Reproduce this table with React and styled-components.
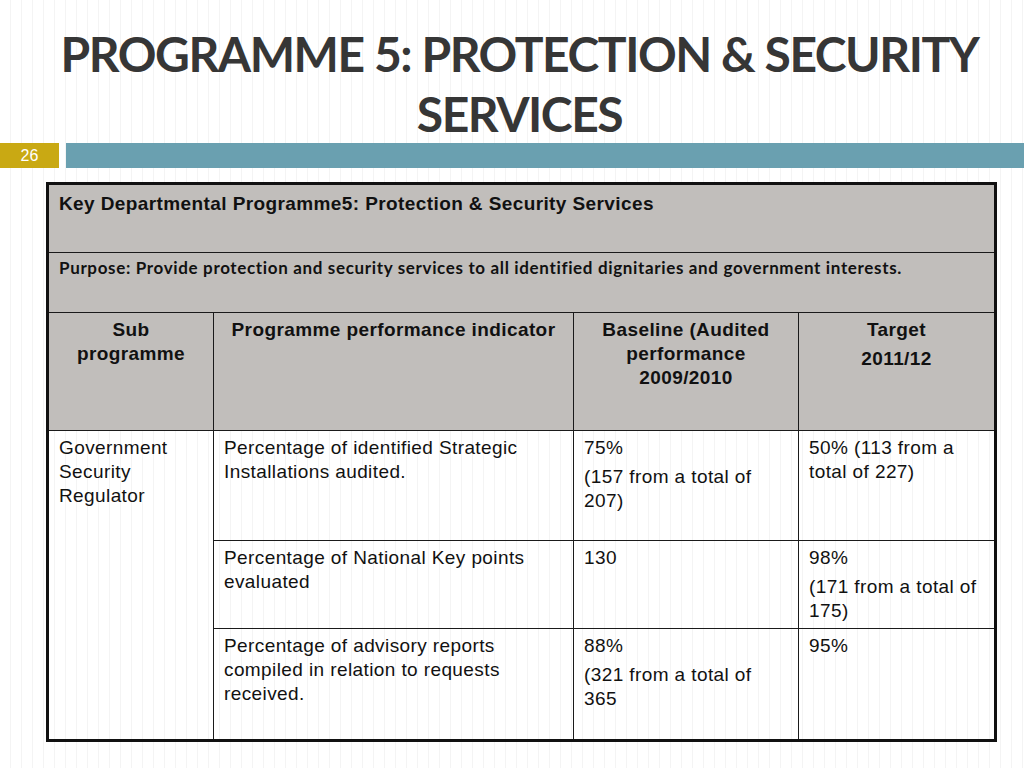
import React from "react";
import styled, { createGlobalStyle } from "styled-components";

const GlobalStyle = createGlobalStyle`
  html, body {
    margin: 0;
    padding: 0;
  }
  body {
    width: 1024px;
    height: 768px;
    overflow: hidden;
    background-color: #ffffff;
    background-image: repeating-linear-gradient(
      90deg,
      transparent 0px,
      transparent 10px,
      #f4f4f4 10px,
      #f4f4f4 11px
    );
    font-family: "Liberation Sans", Arial, sans-serif;
  }
`;

const St = {
  Slide: styled.div`
    width: 1024px;
    height: 768px;
    display: flex;
    flex-direction: column;
  `,

  Title: styled.h1`
    margin: 0;
    padding: 24px 0 0 15px;
    height: 143px;
    flex-shrink: 0;
    box-sizing: border-box;
    text-align: center;
    font-family: "Lato", "Liberation Sans", sans-serif;
    font-weight: 700;
    font-size: 48px;
    line-height: 60px;
    letter-spacing: -1.45px;
    color: #363636;
  `,

  BarRow: styled.div`
    display: flex;
    gap: 7px;
    height: 25px;
    flex-shrink: 0;
  `,

  PageNumber: styled.div`
    width: 59px;
    background-color: #c9a913;
    color: #ffffff;
    font-size: 16px;
    line-height: 25px;
    text-align: center;
  `,

  Stripe: styled.div`
    flex: 1;
    background-color: #6aa0b0;
  `,

  TableWrap: styled.div`
    padding: 14px 0 0 46px;
  `,

  Table: styled.table`
    width: 951px;
    border-collapse: collapse;
    border: 3px solid #111111;
    table-layout: fixed;
  `,

  Cell: styled.td`
    border: 1px solid #1a1a1a;
    background-color: ${({ shaded }) => (shaded ? "#c1bebb" : "transparent")};
    vertical-align: top;
    text-align: ${({ center }) => (center ? "center" : "left")};
    font-weight: ${({ bold }) => (bold ? 700 : 400)};
    font-size: 19px;
    letter-spacing: 0.4px;
    line-height: 24px;
    color: #111111;
    height: ${({ h }) => h}px;
    padding: ${({ pad }) => pad || "5px 10px 0 10px"};
    box-sizing: border-box;
  `,

  Purpose: styled.span`
    font-family: "Lato", "Liberation Sans", sans-serif;
    font-weight: 700;
    font-size: 17px;
    letter-spacing: 0.65px;
  `,

  Para: styled.div`
    & + & {
      margin-top: 5px;
    }
  `,
};

const rows = [
  {
    indicator: "Percentage of identified Strategic Installations audited.",
    baseline: ["75%", "(157 from a total of 207)"],
    target: ["50% (113 from a total of 227)"],
    h: 110,
  },
  {
    indicator: "Percentage of National Key points evaluated",
    baseline: ["130"],
    target: ["98%", "(171 from a total of 175)"],
    h: 88,
  },
  {
    indicator:
      "Percentage of advisory reports compiled in relation to requests received.",
    baseline: ["88%", "(321 from a total of 365"],
    target: ["95%"],
    h: 112,
  },
];

const App = () => {
  return (
    <St.Slide>
      <GlobalStyle />
      <St.Title>
        PROGRAMME 5: PROTECTION &amp; SECURITY
        <br />
        SERVICES
      </St.Title>
      <St.BarRow>
        <St.PageNumber>26</St.PageNumber>
        <St.Stripe />
      </St.BarRow>
      <St.TableWrap>
        <St.Table>
          <colgroup>
            <col style={{ width: 166 }} />
            <col style={{ width: 360 }} />
            <col style={{ width: 225 }} />
            <col style={{ width: 197 }} />
          </colgroup>
          <tbody>
            <tr>
              <St.Cell colSpan={4} shaded bold h={69} pad="7px 10px 0 10px">
                Key Departmental Programme5: Protection &amp; Security Services
              </St.Cell>
            </tr>
            <tr>
              <St.Cell colSpan={4} shaded h={60} pad="3px 10px 0 10px">
                <St.Purpose>
                  Purpose: Provide protection and security services to all
                  identified dignitaries and government interests.
                </St.Purpose>
              </St.Cell>
            </tr>
            <tr>
              <St.Cell shaded bold center h={118}>
                Sub programme
              </St.Cell>
              <St.Cell shaded bold center h={118}>
                Programme performance indicator
              </St.Cell>
              <St.Cell shaded bold center h={118}>
                Baseline (Audited performance 2009/2010
              </St.Cell>
              <St.Cell shaded bold center h={118}>
                <St.Para>Target</St.Para>
                <St.Para>2011/12</St.Para>
              </St.Cell>
            </tr>
            {rows.map((row, i) => (
              <tr key={i}>
                {i === 0 && (
                  <St.Cell rowSpan={3} h={row.h}>
                    Government Security Regulator
                  </St.Cell>
                )}
                <St.Cell h={row.h}>{row.indicator}</St.Cell>
                <St.Cell h={row.h}>
                  {row.baseline.map((p, j) => (
                    <St.Para key={j}>{p}</St.Para>
                  ))}
                </St.Cell>
                <St.Cell h={row.h}>
                  {row.target.map((p, j) => (
                    <St.Para key={j}>{p}</St.Para>
                  ))}
                </St.Cell>
              </tr>
            ))}
          </tbody>
        </St.Table>
      </St.TableWrap>
    </St.Slide>
  );
};

export default App;
